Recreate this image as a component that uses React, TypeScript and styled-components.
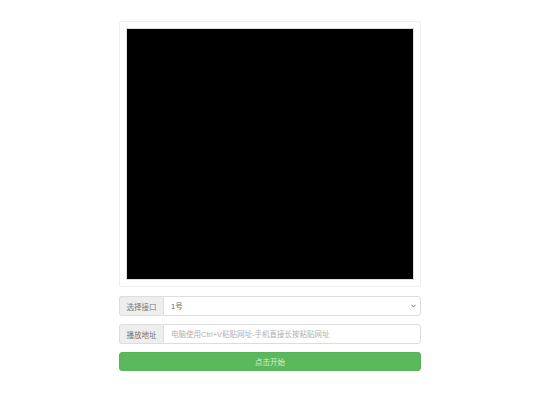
import React from 'react'
import styled, { createGlobalStyle } from 'styled-components';

const GlobalStyle = createGlobalStyle`
  html, body {
    margin: 0;
    padding: 0;
    background: #fff;
    font-family: "Liberation Sans", "Noto Sans CJK SC", sans-serif;
  }
`;

const Page = styled.div`
  width: 302px;
  margin: 21px auto 0;
  display: flex;
  flex-direction: column;
`;

const PlayerCard = styled.div`
  border: 1px solid #eee;
  border-radius: 2px;
  padding: 6px;
  height: 252px;
  margin-bottom: 9px;
`;

const Screen = styled.div`
  height: 100%;
  background: #000;
  border: 1px solid #ddd;
  box-sizing: border-box;
`;

const InputGroup = styled.div`
  display: flex;
  height: 20px;
  margin-bottom: 8px;
  font-size: 7.5px;
`;

const Addon = styled.span`
  display: flex;
  align-items: center;
  justify-content: center;
  width: 44px;
  background: #eee;
  color: #777;
  border: 1px solid #ddd;
  border-right: none;
  border-radius: 3px 0 0 3px;
  box-sizing: border-box;
  padding-top: 1px;
`;

const SelectWrap = styled.div`
  flex: 1;
  position: relative;
  display: flex;
`;

const Select = styled.select`
  flex: 1;
  height: 20px;
  border: 1px solid #ddd;
  border-radius: 0 3px 3px 0;
  background: #fff;
  color: #666;
  font-size: 7.5px;
  font-family: inherit;
  padding: 0 7px;
  outline: none;
  appearance: none;
`;

const Caret = styled.svg`
  position: absolute;
  right: 5px;
  top: 8px;
  pointer-events: none;
`;

const Input = styled.input`
  flex: 1;
  height: 20px;
  border: 1px solid #ddd;
  border-radius: 0 3px 3px 0;
  background: #fff;
  color: #666;
  font-size: 7.5px;
  font-family: inherit;
  padding: 0 7px;
  box-sizing: border-box;
  outline: none;

  &::placeholder {
    color: #b0b0b0;
  }
`;

const StartButton = styled.button`
  height: 19px;
  border: 1px solid #57b157;
  border-radius: 3px;
  background: #5cb85c;
  color: #d8eed8;
  font-size: 7.5px;
  font-family: inherit;
  padding: 0;
`;

const App = () =>
  <>
    <GlobalStyle />
    <Page>
      <PlayerCard>
        <Screen />
      </PlayerCard>
      <InputGroup>
        <Addon>选择接口</Addon>
        <SelectWrap>
          <Select defaultValue="1">
            <option value="1">1号</option>
          </Select>
          <Caret width="5" height="4" viewBox="0 0 5 4">
            <path d="M0.5 0.8 L2.5 3 L4.5 0.8" fill="none" stroke="#777" strokeWidth="1" />
          </Caret>
        </SelectWrap>
      </InputGroup>
      <InputGroup>
        <Addon>播放地址</Addon>
        <Input placeholder="电脑使用Ctrl+V粘贴网址-手机直接长按粘贴网址" />
      </InputGroup>
      <StartButton>点击开始</StartButton>
    </Page>
  </>;

export default App;
